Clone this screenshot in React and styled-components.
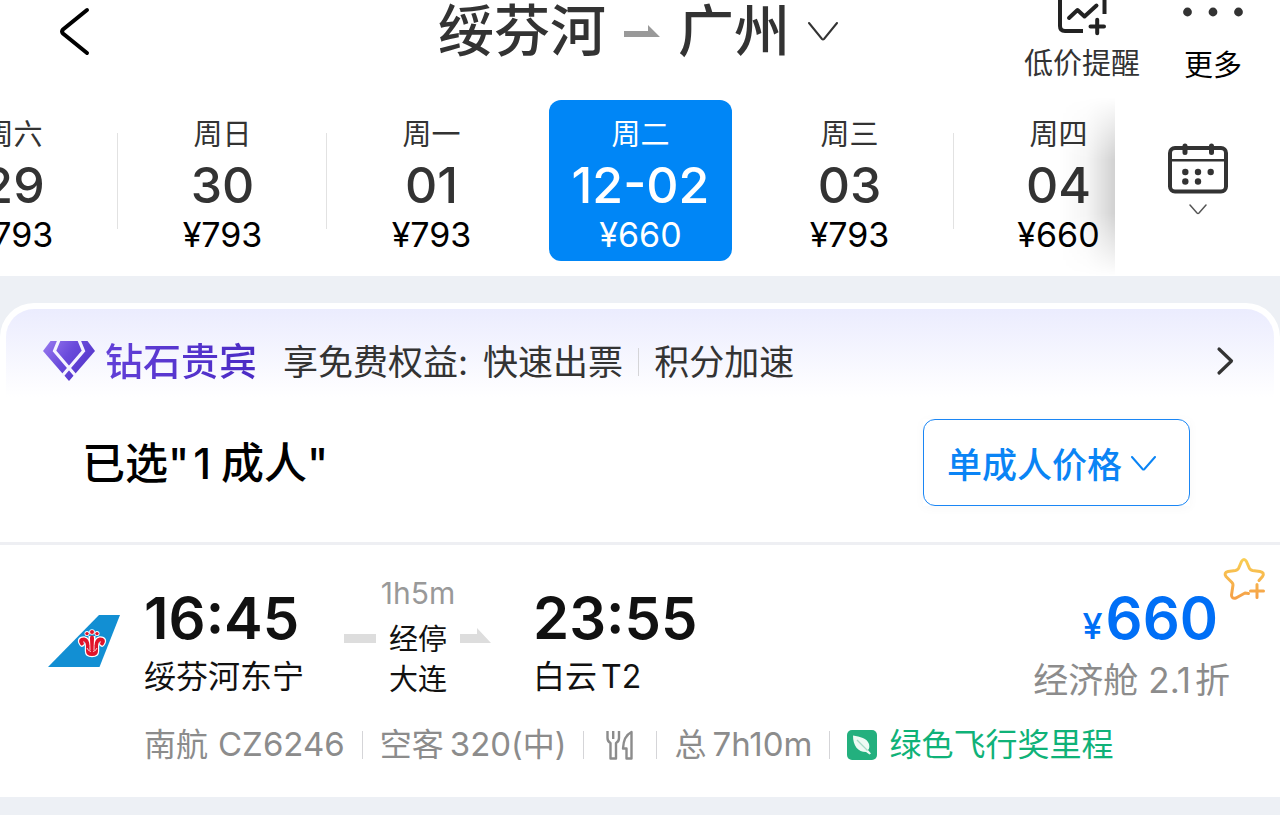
import { useState } from 'react';
import styled, { createGlobalStyle } from 'styled-components';

const GlobalStyle = createGlobalStyle`
  * {
    box-sizing: border-box;
  }

  body {
    margin: 0;
    background: #edf0f5;
    color: #111;
    font-family: Inter, "Noto Sans CJK SC", sans-serif;
  }

  button, select {
    margin: 0;
    padding: 0;
    border: 0;
    background: none;
    color: inherit;
    font: inherit;
    cursor: pointer;
  }

  svg {
    display: block;
    flex: none;
  }
`;

const days = [
  { week: '周六', date: '29', price: '¥793' },
  { week: '周日', date: '30', price: '¥793' },
  { week: '周一', date: '01', price: '¥793' },
  { week: '周二', date: '12-02', price: '¥660' },
  { week: '周三', date: '03', price: '¥793' },
  { week: '周四', date: '04', price: '¥660' },
];

const Page = styled.div`
  overflow: hidden;
`;

/* top bar */

const TopBar = styled.header`
  display: grid;
  grid-template-columns: 1fr auto 1fr;
  align-items: start;
  height: 97px;
  padding: 0 36px 0 32px;
  background: #fff;
`;

const BackButton = styled.button`
  justify-self: start;
  height: 62px;
  margin-left: 26px;
`;

const RouteTitle = styled.button`
  display: flex;
  align-items: center;
  gap: 18px;
  height: 62px;
  color: #333;
  font-size: 56px;
  line-height: 62px;
  font-weight: 500;
`;

const Actions = styled.div`
  display: flex;
  justify-self: end;
  gap: 42px;
`;

const Action = styled.button`
  display: flex;
  flex-direction: column;
  align-items: center;
  gap: 10px;
  color: ${({ $dark }) => ($dark ? '#000' : '#333')};
  font-size: 29px;
  line-height: 36px;
`;

/* date strip */

const DateBar = styled.nav`
  display: flex;
  background: #fff;
`;

const DateScroller = styled.div`
  position: relative;
  flex: 1;
  min-width: 0;
  overflow: hidden;
  padding: 3px 0 15px;

  &::after {
    content: '';
    position: absolute;
    top: 0;
    right: 0;
    bottom: 0;
    width: 56px;
    background: linear-gradient(to left, rgba(0, 0, 0, 0.18), rgba(0, 0, 0, 0.04) 50%, transparent);
    mask-image: linear-gradient(transparent, #000 35%, #000 65%, transparent);
    pointer-events: none;
  }
`;

const DateList = styled.ul`
  display: flex;
  margin: 0 0 0 -91px;
  padding: 0;
  list-style: none;
`;

const DateItem = styled.li`
  flex: 0 0 209px;
  display: flex;
  justify-content: center;
  background: ${({ $divided }) =>
    $divided ? 'linear-gradient(#e2e2e2, #e2e2e2) right center / 1px 96px no-repeat' : 'none'};
`;

const DateButton = styled.button`
  display: flex;
  flex-direction: column;
  align-items: center;
  gap: 4px;
  width: 183px;
  padding: 17px 0 8px;
  border-radius: 12px;
  background: ${({ $active }) => ($active ? '#0086f6' : 'transparent')};
  color: ${({ $active }) => ($active ? '#fff' : '#333')};
`;

const Week = styled.span`
  font-size: 29px;
  line-height: 36px;
`;

const DateNumber = styled.span`
  font-size: 50px;
  line-height: 56px;
  font-weight: 500;
`;

const DatePrice = styled.span`
  color: ${({ $active }) => ($active ? '#fff' : '#000')};
  font-size: 34px;
  line-height: 36px;
`;

const CalendarButton = styled.button`
  display: flex;
  flex-direction: column;
  align-items: center;
  justify-content: center;
  gap: 9px;
  width: 165px;
  padding-bottom: 16px;
`;

/* list */

const List = styled.main`
  margin-top: 27px;
  padding: 6px 0 0;
  border-radius: 34px 34px 0 0;
  background: #fff;
`;

const VipBanner = styled.a`
  display: flex;
  align-items: center;
  height: 104px;
  margin: 0 6px;
  padding: 0 40px 0 37px;
  border-radius: 28px 28px 0 0;
  background: linear-gradient(#ebecfe, #fff 88px);
  color: #333;
  font-size: 35px;
  line-height: 48px;
  text-decoration: none;
`;

const VipName = styled.strong`
  margin: 0 26px 0 10px;
  background: linear-gradient(90deg, #6340d8, #4a2bc4);
  background-clip: text;
  color: transparent;
  font-size: 38px;
  font-weight: 500;
`;

const VipPerks = styled.span`
  display: flex;
  flex: 1;
  align-items: center;
  gap: 15px;
  padding-top: 2px;
`;

const Divider = styled.i`
  width: 1px;
  height: 28px;
  background: #d5d5d8;
`;

const PassengerRow = styled.section`
  display: flex;
  align-items: center;
  justify-content: space-between;
  padding: 6px 90px 36px 82px;
  border-bottom: 3px solid #eeeff3;
`;

const PassengerLabel = styled.label`
  color: #000;
  font-size: 43px;
  line-height: 60px;
  font-weight: 500;
`;

const PassengerCount = styled.span`
  margin: 0 10px 0 4px;
`;

const SelectBox = styled.div`
  position: relative;
  color: #0a84f5;
  box-shadow: 0 2px 10px rgba(0, 0, 0, 0.03);

  svg {
    position: absolute;
    top: 37px;
    right: 34px;
    pointer-events: none;
  }
`;

const PriceSelect = styled.select`
  display: block;
  width: 267px;
  height: 87px;
  padding: 4px 60px 0 23px;
  border: 1px solid #1a86f5;
  border-radius: 12px;
  background: #fff;
  font-size: 35px;
  font-weight: 500;
  appearance: none;
`;

/* flight card */

const FlightCard = styled.article`
  position: relative;
  padding: 31px 50px 32px 48px;
  background: #fff;
`;

const FlightMain = styled.div`
  display: flex;
  align-items: flex-start;
`;

const AirlineLogo = styled.div`
  width: 96px;
  padding-top: 39px;
`;

const Stop = styled.div`
  min-width: ${({ $wide }) => ($wide ? '200px' : '0')};
  padding-top: 12px;
`;

const Time = styled.div`
  font-size: 58px;
  line-height: 60px;
  font-weight: 600;
`;

const Station = styled.div`
  margin-top: 9px;
  font-size: 32px;
  line-height: 40px;
`;

const Latin = styled.span`
  margin: 0 4px;
`;

const Via = styled.div`
  display: grid;
  grid-template-columns: 32px auto 32px;
  column-gap: 13px;
  justify-items: center;
  margin-right: 41px;
  font-size: 29px;
  line-height: 40px;
`;

const ViaTime = styled.span`
  grid-column: 1 / -1;
  margin-bottom: 10px;
  color: #999;
  font-size: 30px;
  line-height: 34px;
`;

const ViaBar = styled.i`
  align-self: center;
  width: 32px;
  height: 9px;
  margin-bottom: 4px;
  background: #ddd;
`;

const ViaArrow = styled.svg`
  align-self: center;
  margin-bottom: 10px;
`;

const ViaCity = styled.span`
  grid-column: 2;
`;

const Fare = styled.div`
  margin-left: auto;
  padding-top: 12px;
  text-align: right;
`;

const FarePrice = styled.div`
  padding-right: 12px;
  color: #006ff6;
  font-size: 58px;
  line-height: 60px;
  font-weight: 600;
`;

const Currency = styled.span`
  margin-right: 3px;
  font-size: 36px;
  line-height: 36px;
  font-weight: 500;
`;

const Cabin = styled.div`
  margin-top: 11px;
  color: #8c8c8c;
  font-size: 35px;
  line-height: 42px;
`;

const Discount = styled.span`
  margin: 0 4px 0 10px;
`;

const FavButton = styled.button`
  position: absolute;
  top: 12px;
  right: 14px;
`;

const FlightInfo = styled.div`
  display: flex;
  align-items: center;
  gap: 17px;
  margin-top: 23px;
  padding-left: 96px;
  color: #8c8c8c;
  font-size: 32px;
  line-height: 40px;
`;

const FlightCode = styled.span`
  margin-left: ${({ $gap }) => $gap || '6px'};
  font-size: 33px;
`;

const MealIcon = styled.svg`
  margin: 0 5px;
`;

const GreenTag = styled.span`
  display: flex;
  align-items: center;
  gap: 12px;
  color: #0fb278;
`;

const Chevron = ({ width, height, stroke = 2, color = 'currentColor' }) => (
  <svg width={width} height={height} viewBox={`0 0 ${width} ${height}`} fill="none" aria-hidden="true">
    <path
      d={`M1 1 L${width / 2 - 1} ${height - 2} Q${width / 2} ${height - 1} ${width / 2 + 1} ${height - 2} L${width - 1} 1`}
      stroke={color}
      strokeWidth={stroke}
      strokeLinecap="round"
    />
  </svg>
);

const DiamondIcon = () => (
  <svg width="52" height="40" viewBox="0 0 52 40" aria-hidden="true">
    <defs>
      <linearGradient id="diamond" x1="0" y1="0" x2="1" y2="0.6">
        <stop offset="0" stopColor="#9a7bf0" />
        <stop offset="0.5" stopColor="#6a4bdb" />
        <stop offset="1" stopColor="#5233c9" />
      </linearGradient>
    </defs>
    <path d="M7.5 0 H44.5 L52 10 L26 40 L0 10 Z" fill="url(#diamond)" />
    <path
      d="M16 -1 L11.5 10 L32 34 M36 -1 L40.5 10 L20 34"
      fill="none"
      stroke="#f5f4ff"
      strokeWidth="3.2"
    />
  </svg>
);

const TailLogo = () => (
  <svg width="72" height="52" viewBox="0 0 72 52" role="img" aria-label="南航">
    <path d="M0 52 L51 0 H72 L51.5 52 Z" fill="#128fd3" />
    <g stroke="#fff" strokeWidth="2.4" strokeLinejoin="round" fill="#fff">
      <path d="M38 29 H50 V36 Q50 41 44 41 Q38 41 38 36 Z" />
      <path d="M34 29 Q30.5 24 36 24 Q40 24.5 41 32 M54 29 Q57.5 24 52 24 Q48 24.5 47 32" fill="none" strokeWidth="5.6" strokeLinecap="round" />
      <path d="M44 21 V32" strokeWidth="7" />
    </g>
    <g fill="#fff">
      <circle cx="39" cy="18.6" r="2.5" />
      <circle cx="44" cy="17" r="2.8" />
      <circle cx="49" cy="18.6" r="2.5" />
    </g>
    <g fill="#e0132a">
      <path d="M38 30 H50 V36 Q50 41 44 41 Q38 41 38 36 Z" />
      <circle cx="39" cy="18.6" r="1.7" />
      <circle cx="44" cy="17" r="2" />
      <circle cx="49" cy="18.6" r="1.7" />
    </g>
    <g stroke="#e0132a" strokeWidth="3.8" fill="none" strokeLinecap="round">
      <path d="M34 28.5 Q31 24.5 36 24.5 Q40 25 40 33" />
      <path d="M54 28.5 Q57 24.5 52 24.5 Q48 25 48 33" />
      <path d="M44 22.5 V34" strokeWidth="4" />
    </g>
    <path d="M41.5 24 Q42 31 42 35 M46.500 24 Q46 31 46 35 M39 33 Q40 36 43 36.500 M49 33 Q48 36 45 36.500" fill="none" stroke="#fff" strokeWidth="0.8" />
  </svg>
);

const CalendarIcon = () => (
  <svg width="60" height="52" viewBox="0 0 60 52" fill="none" stroke="#333" aria-hidden="true">
    <rect x="2" y="5" width="56" height="43.5" rx="5" strokeWidth="4" />
    <path d="M3 17.3 H57" strokeWidth="2.4" />
    <path d="M17 3 V9.5 M43.5 3 V9.5" strokeWidth="5" strokeLinecap="round" />
    <g fill="#333" stroke="none">
      <circle cx="17.3" cy="29" r="3.2" />
      <circle cx="30" cy="29" r="3.2" />
      <circle cx="42.7" cy="29" r="3.2" />
      <circle cx="17.3" cy="38.5" r="3.2" />
      <circle cx="30" cy="38.5" r="3.2" />
    </g>
  </svg>
);

const StarPlusIcon = () => (
  <svg width="43" height="44" viewBox="0 0 43 44" fill="none" aria-hidden="true">
    <defs>
      <linearGradient id="star" x1="0" y1="0" x2="0" y2="44" gradientUnits="userSpaceOnUse">
        <stop offset="0" stopColor="#f9d054" />
        <stop offset="1" stopColor="#f59d47" />
      </linearGradient>
    </defs>
    <g stroke="url(#star)" strokeWidth="3" strokeLinecap="round" strokeLinejoin="round">
      <path d="M25.5 36.5 L22 36 L13 41 Q8.5 42 8.5 38 L10 28 Q10 26.5 9 25.5 L3 19.5 Q0.5 15.5 5 14.5 L12.5 13.5 Q14.5 13 15.5 11.5 L18.5 4.5 Q21 0.5 23.5 4.5 L26.5 11.5 Q27.5 13 29.5 13.5 L37 14.5 Q42 15.5 39.5 19.5 L36 23.5" />
      <path d="M27.5 34 H40.5 M34 27.5 V40.5" />
    </g>
  </svg>
);

const App = () => {
  const [selected, setSelected] = useState(3);

  return (
    <Page>
      <GlobalStyle />

      <TopBar>
        <BackButton aria-label="返回">
          <svg width="32" height="50" viewBox="0 0 32 50" fill="none" aria-hidden="true">
            <path d="M29 4 L5 23.5 Q3 25.5 5 27.5 L29 47" stroke="#000" strokeWidth="4" strokeLinecap="round" />
          </svg>
        </BackButton>

        <RouteTitle>
          绥芬河
          <svg width="36" height="12" viewBox="0 0 36 12" aria-hidden="true">
            <path d="M0 6 H24 V0 L36 12 H0 Z" fill="#999" />
          </svg>
          广州
          <Chevron width={30} height={19} />
        </RouteTitle>

        <Actions>
          <Action>
            <svg width="50" height="36" viewBox="0 0 50 36" fill="none" stroke="#222" aria-hidden="true">
              <path d="M3 -4 V26 Q3 31 8 31 H26 M47.5 -4 V14" strokeWidth="4" />
              <path d="M12 18 L20.5 10 L27.5 16.5 L39.5 5.5" strokeWidth="4" strokeLinecap="round" strokeLinejoin="round" />
              <path d="M33.5 26.5 H47 M40.2 19.8 V33.2" strokeWidth="4" strokeLinecap="round" />
            </svg>
            低价提醒
          </Action>
          <Action $dark>
            <svg width="62" height="38" viewBox="0 0 62 38" fill="#333" aria-hidden="true">
              <circle cx="5.5" cy="12" r="4.4" />
              <circle cx="31" cy="12" r="4.4" />
              <circle cx="56.5" cy="12" r="4.4" />
            </svg>
            更多
          </Action>
        </Actions>
      </TopBar>

      <DateBar>
        <DateScroller>
          <DateList>
            {days.map((day, index) => (
              <DateItem key={day.date} $divided={index !== selected && index + 1 !== selected}>
                <DateButton $active={index === selected} onClick={() => setSelected(index)}>
                  <Week>{day.week}</Week>
                  <DateNumber>{day.date}</DateNumber>
                  <DatePrice $active={index === selected}>{day.price}</DatePrice>
                </DateButton>
              </DateItem>
            ))}
          </DateList>
        </DateScroller>
        <CalendarButton aria-label="选择日期">
          <CalendarIcon />
          <Chevron width={18} height={11} stroke={1.5} color="#555" />
        </CalendarButton>
      </DateBar>

      <List>
        <VipBanner href="#vip">
          <DiamondIcon />
          <VipName>钻石贵宾</VipName>
          <VipPerks>
            <span>享免费权益:</span>
            <span>快速出票</span>
            <Divider />
            <span>积分加速</span>
          </VipPerks>
          <svg width="18" height="30" viewBox="0 0 18 30" fill="none" aria-hidden="true">
            <path d="M3 3 L15.5 15 L3 27" stroke="#333" strokeWidth="3.2" strokeLinecap="round" strokeLinejoin="round" />
          </svg>
        </VipBanner>

        <PassengerRow>
          <PassengerLabel htmlFor="price-mode">
            已选"<PassengerCount>1</PassengerCount>成人"
          </PassengerLabel>
          <SelectBox>
            <PriceSelect id="price-mode">
              <option>单成人价格</option>
            </PriceSelect>
            <Chevron width={25} height={15} />
          </SelectBox>
        </PassengerRow>

        <FlightCard>
          <FlightMain>
            <AirlineLogo>
              <TailLogo />
            </AirlineLogo>
            <Stop $wide>
              <Time>16:45</Time>
              <Station>绥芬河东宁</Station>
            </Stop>
            <Via>
              <ViaTime>1h5m</ViaTime>
              <ViaBar />
              <span>经停</span>
              <ViaArrow width="32" height="15" viewBox="0 0 32 15" aria-hidden="true">
                <path d="M0 6 H17 V0 L31 15 H0 Z" fill="#ddd" />
              </ViaArrow>
              <ViaCity>大连</ViaCity>
            </Via>
            <Stop>
              <Time>23:55</Time>
              <Station>
                白云<Latin>T2</Latin>
              </Station>
            </Stop>
            <Fare>
              <FarePrice>
                <Currency>¥</Currency>660
              </FarePrice>
              <Cabin>
                经济舱<Discount>2.1</Discount>折
              </Cabin>
            </Fare>
          </FlightMain>

          <FlightInfo>
            <span>
              南航<FlightCode $gap="10px">CZ6246</FlightCode>
            </span>
            <Divider />
            <span>
              空客<FlightCode>320</FlightCode>(中)
            </span>
            <Divider />
            <MealIcon width="28" height="30" viewBox="0 0 28 30" fill="none" stroke="#8c8c8c" strokeWidth="2.4" strokeLinejoin="round" role="img" aria-label="餐食">
              <path d="M1.5 1 V8 Q1.5 11.5 4.5 13 V28.500 H10 V13 Q13 11.5 13 8 V1 M7.2 1 V9" />
              <path d="M25.5 2 Q17.5 6 17 18.5 H20.5 V28.500 H25.500 Z" />
            </MealIcon>
            <Divider />
            <span>
              总<FlightCode>7h10m</FlightCode>
            </span>
            <Divider />
            <GreenTag>
              <svg width="30" height="30" viewBox="0 0 30 30" aria-hidden="true">
                <rect width="30" height="30" rx="5" fill="#23b07e" />
                <path d="M6 5.5 C13 7 20 8 22 14 Q23 18 21 20 L24 23.5 L22.5 24.5 L19 22 C11 22 6 16 6 5.5 Z" fill="#eefaf4" />
                <path d="M10 10 L20.5 20.5" stroke="#a5dcc6" strokeWidth="1.2" />
              </svg>
              绿色飞行奖里程
            </GreenTag>
          </FlightInfo>

          <FavButton aria-label="收藏">
            <StarPlusIcon />
          </FavButton>
        </FlightCard>
      </List>
    </Page>
  );
};

export default App;
